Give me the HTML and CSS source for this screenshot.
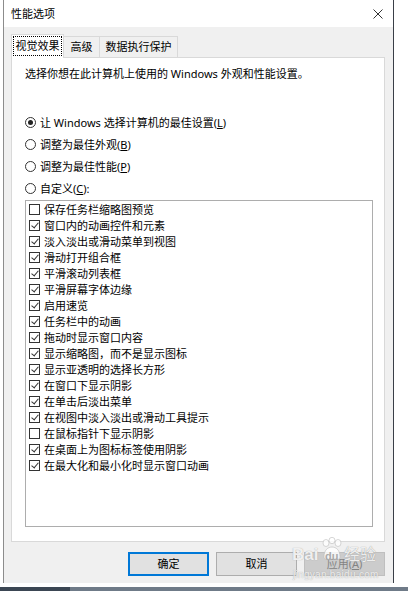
FILE: index.html
```html
<!DOCTYPE html>
<html lang="zh-CN">
<head>
<meta charset="utf-8">
<title>性能选项</title>
<link rel="stylesheet" href="styles.css">
</head>
<body>
<div class="screen">
  <div class="dialog">
    <div class="titlebar">
      <span class="title">性能选项</span>
      <svg class="close" width="10" height="10" viewBox="0 0 10 10"><path d="M0.5 0.5 L9.5 9.5 M9.5 0.5 L0.5 9.5" stroke="#333" stroke-width="1" fill="none"/></svg>
    </div>
    <div class="body">
      <div class="tabs">
        <div class="tab active"><span class="focus">视觉效果</span></div>
        <div class="tab">高级</div>
        <div class="tab">数据执行保护</div>
      </div>
      <div class="panel">
        <p class="desc">选择你想在此计算机上使用的 Windows 外观和性能设置。</p>
        <div class="radios">
          <div class="radio-row"><span class="radio checked"></span><span>让 Windows 选择计算机的最佳设置(<u>L</u>)</span></div>
          <div class="radio-row"><span class="radio"></span><span>调整为最佳外观(<u>B</u>)</span></div>
          <div class="radio-row"><span class="radio"></span><span>调整为最佳性能(<u>P</u>)</span></div>
          <div class="radio-row"><span class="radio"></span><span>自定义(<u>C</u>):</span></div>
        </div>
        <div class="listbox">
          <div class="item"><span class="cb"></span>保存任务栏缩略图预览</div>
          <div class="item"><span class="cb on"></span>窗口内的动画控件和元素</div>
          <div class="item"><span class="cb on"></span>淡入淡出或滑动菜单到视图</div>
          <div class="item"><span class="cb on"></span>滑动打开组合框</div>
          <div class="item"><span class="cb on"></span>平滑滚动列表框</div>
          <div class="item"><span class="cb on"></span>平滑屏幕字体边缘</div>
          <div class="item"><span class="cb on"></span>启用速览</div>
          <div class="item"><span class="cb on"></span>任务栏中的动画</div>
          <div class="item"><span class="cb on"></span>拖动时显示窗口内容</div>
          <div class="item"><span class="cb on"></span>显示缩略图，而不是显示图标</div>
          <div class="item"><span class="cb on"></span>显示亚透明的选择长方形</div>
          <div class="item"><span class="cb on"></span>在窗口下显示阴影</div>
          <div class="item"><span class="cb on"></span>在单击后淡出菜单</div>
          <div class="item"><span class="cb on"></span>在视图中淡入淡出或滑动工具提示</div>
          <div class="item"><span class="cb"></span>在鼠标指针下显示阴影</div>
          <div class="item"><span class="cb on"></span>在桌面上为图标标签使用阴影</div>
          <div class="item"><span class="cb on"></span>在最大化和最小化时显示窗口动画</div>
        </div>
      </div>
      <div class="buttons">
        <button class="btn default">确定</button>
        <button class="btn">取消</button>
        <button class="btn disabled">应用(<u>A</u>)</button>
      </div>
    </div>
  </div>
  <div class="taskbar"><span class="taskbar-dark"></span></div>
  <div class="watermark">
    <span class="wm-bai">Bai</span>
    <svg class="wm-paw" width="22" height="24" viewBox="0 0 22 24">
      <ellipse cx="5" cy="6" rx="3" ry="3.5" fill="#fff" fill-opacity="0.8" stroke="#bbb" stroke-width="0.6"/>
      <ellipse cx="11" cy="3.5" rx="3" ry="3.2" fill="#fff" fill-opacity="0.8" stroke="#bbb" stroke-width="0.6"/>
      <ellipse cx="17" cy="6" rx="3" ry="3.5" fill="#fff" fill-opacity="0.8" stroke="#bbb" stroke-width="0.6"/>
      <path d="M3 20 C3 13 7 10 11 10 C15 10 19 13 19 20 C19 23 15 23 11 22 C7 23 3 23 3 20 Z" fill="#fff" fill-opacity="0.8" stroke="#bbb" stroke-width="0.6"/>
    </svg>
    <span class="wm-du">du</span>
    <span class="wm-jy">经验</span>
    <span class="wm-url">jingyan.baidu.com</span>
  </div>
</div>
</body>
</html>
```

FILE: styles.css
```css
* { box-sizing: border-box; }
html, body { margin: 0; padding: 0; background: #fff; }
body {
  width: 408px;
  height: 591px;
  overflow: hidden;
  font-family: "Noto Sans", "Noto Sans CJK SC", sans-serif;
  font-size: 11px;
  color: #000;
}
.screen {
  position: relative;
  width: 408px;
  height: 591px;
}
.dialog {
  margin-left: 3px;
  width: 391px;
  height: 583px;
  border-left: 1px solid #8c8c8c;
  border-right: 1px solid #3a3f47;
  display: flex;
  flex-direction: column;
}
.titlebar {
  height: 28px;
  background: #fff;
  display: flex;
  align-items: center;
  justify-content: space-between;
  padding: 0 10px 0 7px;
}
.title { line-height: 16px; }
.close { display: block; }
.body {
  flex: 1;
  background: #f0f0f0;
  padding: 7px 8px 7px 7px;
  display: flex;
  flex-direction: column;
}
.tabs {
  display: flex;
  align-items: flex-end;
  height: 23px;
  position: relative;
  z-index: 1;
}
.tab {
  height: 21px;
  line-height: 19px;
  border: 1px solid #d9d9d9;
  border-bottom: none;
  background: #f0f0f0;
  padding: 0 6px;
  margin-left: -1px;
  text-align: center;
}
.tab:nth-child(2) { width: 37px; padding: 0; }
.tab:nth-child(3) { width: 79px; padding: 0; }
.tab.active {
  height: 24px;
  margin-bottom: -1px;
  margin-left: 0;
  width: 53px;
  background: #fff;
  padding: 1px 1px 0;
  z-index: 2;
}
.focus {
  display: block;
  border: 1px dotted #000;
  height: 20px;
  line-height: 18px;
}
.panel {
  height: 485px;
  background: #fff;
  border: 1px solid #d9d9d9;
  padding: 8px 11px 0 13px;
}
.desc {
  margin: 0;
  line-height: 16px;
}
.radios {
  margin-top: 29px;
}
.radio-row {
  height: 22px;
  display: flex;
  align-items: center;
  gap: 4px;
}
.radio {
  width: 11px;
  height: 11px;
  border: 1px solid #333;
  border-radius: 50%;
  flex: none;
  margin-left: 0;
  position: relative;
  display: flex;
  align-items: center;
  justify-content: center;
}
.radio.checked::after {
  content: "";
  width: 5px;
  height: 5px;
  border-radius: 50%;
  background: #222;
}
.listbox {
  margin-top: 1px;
  height: 327px;
  border: 1px solid #adadad;
  padding: 0 0 0 3px;
}
.item {
  height: 16px;
  display: flex;
  align-items: center;
  gap: 4px;
  white-space: nowrap;
}
.cb {
  width: 11px;
  height: 11px;
  border: 1px solid #333;
  background: #fff;
  flex: none;
  position: relative;
}
.cb.on::after {
  content: "";
  position: absolute;
  left: 3px;
  top: 0px;
  width: 3px;
  height: 6px;
  border-right: 1px solid #333;
  border-bottom: 1px solid #333;
  transform: rotate(40deg);
}
.buttons {
  margin-top: 10px;
  display: flex;
  justify-content: flex-end;
  gap: 7px;
  padding-right: 0;
}
.btn {
  width: 81px;
  height: 24px;
  font: inherit;
  color: #000;
  background: #e1e1e1;
  border: 1px solid #adadad;
  padding: 0;
  line-height: 20px;
}
.btn.default { border: 2px solid #0078d7; }
.btn.disabled {
  background: #cccccc;
  border-color: #bfbfbf;
  color: #838383;
}
u { text-decoration: underline; }
.taskbar {
  position: absolute;
  left: 0;
  right: 0;
  bottom: 0;
  height: 4px;
  background: #6f7b88;
}
.taskbar-dark {
  display: block;
  width: 70px;
  height: 4px;
  background: #3b4653;
}
.watermark {
  position: absolute;
  left: 290px;
  top: 533px;
  width: 100px;
  height: 50px;
  color: #fff;
  pointer-events: none;
}
.wm-bai {
  position: absolute;
  left: 2px;
  top: 12px;
  font-family: "Liberation Sans", sans-serif;
  font-size: 17px;
  font-weight: bold;
  color: rgba(255,255,255,0.85);
  text-shadow: 0 0 1px #999;
}
.wm-paw {
  position: absolute;
  left: 31px;
  top: 4px;
}
.wm-du {
  position: absolute;
  left: 35px;
  top: 17px;
  font-family: "Liberation Sans", sans-serif;
  font-size: 11px;
  font-weight: bold;
  color: #aaa;
}
.wm-jy {
  position: absolute;
  left: 54px;
  top: 12px;
  font-size: 16px;
  line-height: 18px;
  color: rgba(255,255,255,0.85);
  text-shadow: 0 0 1px #888;
}
.wm-url {
  position: absolute;
  left: 3px;
  top: 36px;
  font-family: "Liberation Sans", sans-serif;
  font-size: 10px;
  letter-spacing: 0.3px;
  color: rgba(255,255,255,0.8);
  text-shadow: 0 0 1px #999;
}
```
